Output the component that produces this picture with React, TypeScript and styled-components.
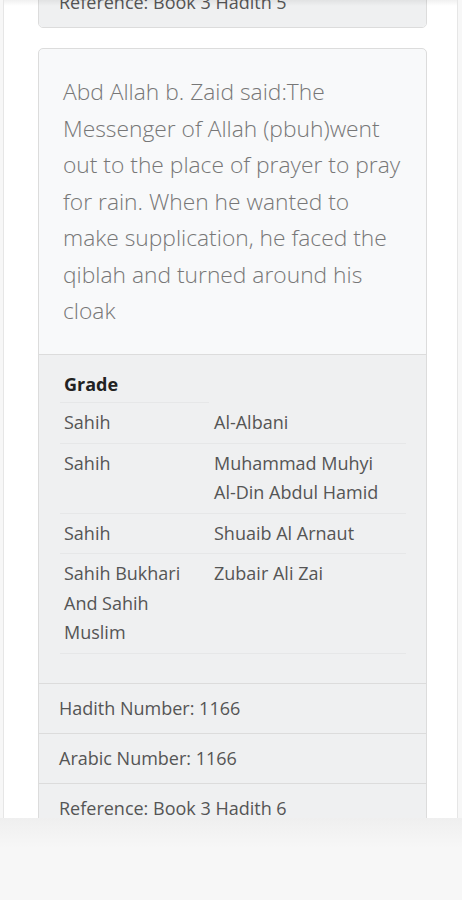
import styled, { createGlobalStyle } from "styled-components";

const GlobalStyle = createGlobalStyle`
    html, body {
        margin: 0;
        padding: 0;
        background: #f7f7f7;
    }
    body {
        font-family: "Open Sans", "Liberation Sans", sans-serif;
        color: #555;
    }
`

const Page = styled.div`
    display: flex;
    flex-direction: column;
    width: 462px;
    height: 900px;
    background: #f7f7f7;
`

const Viewport = styled.div`
    position: relative;
    height: 818px;
    margin: 0 4px 0 3px;
    background: #fff;
    border-left: 1px solid #e6e6e6;
    border-right: 1px solid #e6e6e6;
    overflow: hidden;
    &::before{
        content: "";
        position: absolute;
        left: 0;
        right: 0;
        top: 0;
        height: 6px;
        background: linear-gradient(rgba(0,0,0,0.06), rgba(0,0,0,0));
        z-index: 2;
    }
`

const Scroll = styled.div`
    display: flex;
    flex-direction: column;
    gap: 20px;
    padding: 0 30px 0 34px;
    margin-top: -23px;
`

const Footer = styled.div`
    flex: 1;
    background: linear-gradient(#efefef, #f7f7f7 30px);
`

const Card = styled.div`
    border: 1px solid #dcdcdc;
    border-radius: 5px;
    overflow: hidden;
    background: #f8f9fa;
`

const Body = styled.div`
    padding: 25px 22px 24px 24px;
    font-size: 22.8px;
    font-weight: 300;
    line-height: 36.5px;
    color: #777;
`

const GradeBox = styled.div`
    background: #eff0f1;
    border-top: 1px solid #dcdcdc;
    padding: 13px 20px 29px 21px;
`

const Table = styled.table`
    width: 100%;
    border-collapse: collapse;
    font-size: 18px;
    line-height: 29.5px;
    color: #555;
    th{
        text-align: left;
        font-weight: 700;
        color: #222;
        padding: 2px 4px 3px;
        border-bottom: 1px solid #e6e7e8;
    }
    td{
        vertical-align: top;
        padding: 5px 4px 5px;
        border-bottom: 1px solid #e6e7e8;
    }
    td:first-child{
        width: 141px;
    }
    td:last-child{
        padding-left: 5px;
    }
`

const NoBreak = styled.span`
    white-space: nowrap;
`

const Item = styled.div<{ $clipped?: boolean }>`
    background: #eff0f1;
    border-top: 1px solid #dcdcdc;
    padding: 12px 20px;
    font-size: 18px;
    line-height: 25px;
    color: #555;
    &:first-child{
        border-top: ${p => p.$clipped ? "none" : "1px solid #dcdcdc"};
    }
`

interface IGrade {
    grade: string
    by: string
}

const grades: IGrade[] = [
    { grade: "Sahih", by: "Al-Albani" },
    { grade: "Sahih", by: "Muhammad Muhyi Al-Din Abdul Hamid" },
    { grade: "Sahih", by: "Shuaib Al Arnaut" },
    { grade: "Sahih Bukhari And Sahih Muslim", by: "Zubair Ali Zai" },
]

// keep hyphenated names together, the way the site wraps them
const Name = ({ text }: { text: string }) => <>
    {text.split(" ").map((w, i) => <span key={i}>
        {i > 0 && " "}
        {w.includes("-") ? <NoBreak>{w}</NoBreak> : w}
    </span>)}
</>

const App = () => {
    return <>
        <GlobalStyle />
        <Page>
            <Viewport>
                <Scroll>
                    <Card>
                        <Item $clipped>Reference: Book 3 Hadith 5</Item>
                    </Card>
                    <Card>
                        <Body>
                            Abd Allah b. Zaid said:The Messenger of Allah (pbuh)went out to the place of prayer to pray for rain. When he wanted to make supplication, he faced the qiblah and turned around his cloak
                        </Body>
                        <GradeBox>
                            <Table>
                                <thead>
                                    <tr><th>Grade</th></tr>
                                </thead>
                                <tbody>
                                    {grades.map((g, i) => <tr key={i}>
                                        <td>{g.grade}</td>
                                        <td><Name text={g.by} /></td>
                                    </tr>)}
                                </tbody>
                            </Table>
                        </GradeBox>
                        <Item>Hadith Number: 1166</Item>
                        <Item>Arabic Number: 1166</Item>
                        <Item>Reference: Book 3 Hadith 6</Item>
                    </Card>
                </Scroll>
            </Viewport>
            <Footer />
        </Page>
    </>
}

export default App
